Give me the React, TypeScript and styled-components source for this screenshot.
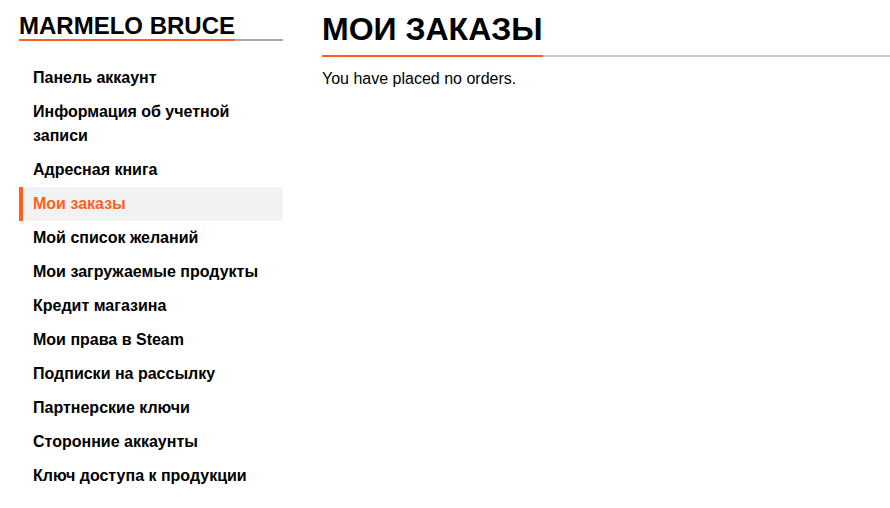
import styled, { createGlobalStyle } from 'styled-components';

const GlobalStyle = createGlobalStyle`
	html, body {
		margin: 0;
		padding: 0;
		background: #ffffff;
	}
	body {
		font-family: 'Liberation Sans', Arial, sans-serif;
		color: #000000;
	}
	* {
		box-sizing: border-box;
	}
`;

const ORANGE = '#ff5f1f';

type NavItem = {
	label: string;
	active?: boolean;
};

const navItems: NavItem[] = [
	{ label: 'Панель аккаунт' },
	{ label: 'Информация об учетной записи' },
	{ label: 'Адресная книга' },
	{ label: 'Мои заказы', active: true },
	{ label: 'Мой список желаний' },
	{ label: 'Мои загружаемые продукты' },
	{ label: 'Кредит магазина' },
	{ label: 'Мои права в Steam' },
	{ label: 'Подписки на рассылку' },
	{ label: 'Партнерские ключи' },
	{ label: 'Сторонние аккаунты' },
	{ label: 'Ключ доступа к продукции' },
];

const App = () => {
	return (
		<>
			<GlobalStyle />
			<Page>
				{/* Sidebar */}
				<Sidebar>
					<SidebarTitleRow>
						<SidebarTitle>MARMELO BRUCE</SidebarTitle>
					</SidebarTitleRow>
					<NavList>
						{navItems.map(item => (
							<NavEntry key={item.label} $active={item.active}>
								{item.label}
							</NavEntry>
						))}
					</NavList>
				</Sidebar>

				{/* Content */}
				<Main>
					<HeadingRow>
						<Heading>МОИ ЗАКАЗЫ</Heading>
					</HeadingRow>
					<EmptyMessage>You have placed no orders.</EmptyMessage>
				</Main>
			</Page>
		</>
	);
};

// Styled Components
const Page = styled.div`
	display: flex;
	align-items: flex-start;
	gap: 39px;
	padding-left: 19px;
	min-height: 508px;
`;

const Sidebar = styled.aside`
	width: 264px;
	flex-shrink: 0;
	padding-top: 13px;
`;

const SidebarTitleRow = styled.div`
	border-bottom: 2px solid #aaaaaa;
`;

const SidebarTitle = styled.div`
	display: inline-block;
	font-size: 24px;
	line-height: 26px;
	font-weight: bold;
	border-bottom: 2px solid ${ORANGE};
	margin-bottom: -2px;
`;

const NavList = styled.ul`
	list-style: none;
	margin: 20px 0 0;
	padding: 0;
`;

const NavEntry = styled.li<{ $active?: boolean }>`
	font-size: 16px;
	line-height: 24px;
	font-weight: bold;
	padding: 5px 10px;
	border-left: 4px solid transparent;
	color: #000000;
	cursor: pointer;

	${props =>
		props.$active &&
		`
		color: ${ORANGE};
		background-color: #f2f2f2;
		border-left-color: ${ORANGE};
	`}
`;

const Main = styled.main`
	flex: 1;
	min-width: 0;
	padding-top: 11px;
`;

const HeadingRow = styled.div`
	border-bottom: 2px solid #cccccc;
`;

const Heading = styled.h1`
	display: inline-block;
	margin: 0 0 -2px;
	font-size: 32px;
	line-height: 36px;
	font-weight: bold;
	padding-bottom: 8px;
	border-bottom: 2px solid ${ORANGE};
`;

const EmptyMessage = styled.p`
	margin: 12px 0 0;
	font-size: 16px;
	line-height: 20px;
`;

export default App;
